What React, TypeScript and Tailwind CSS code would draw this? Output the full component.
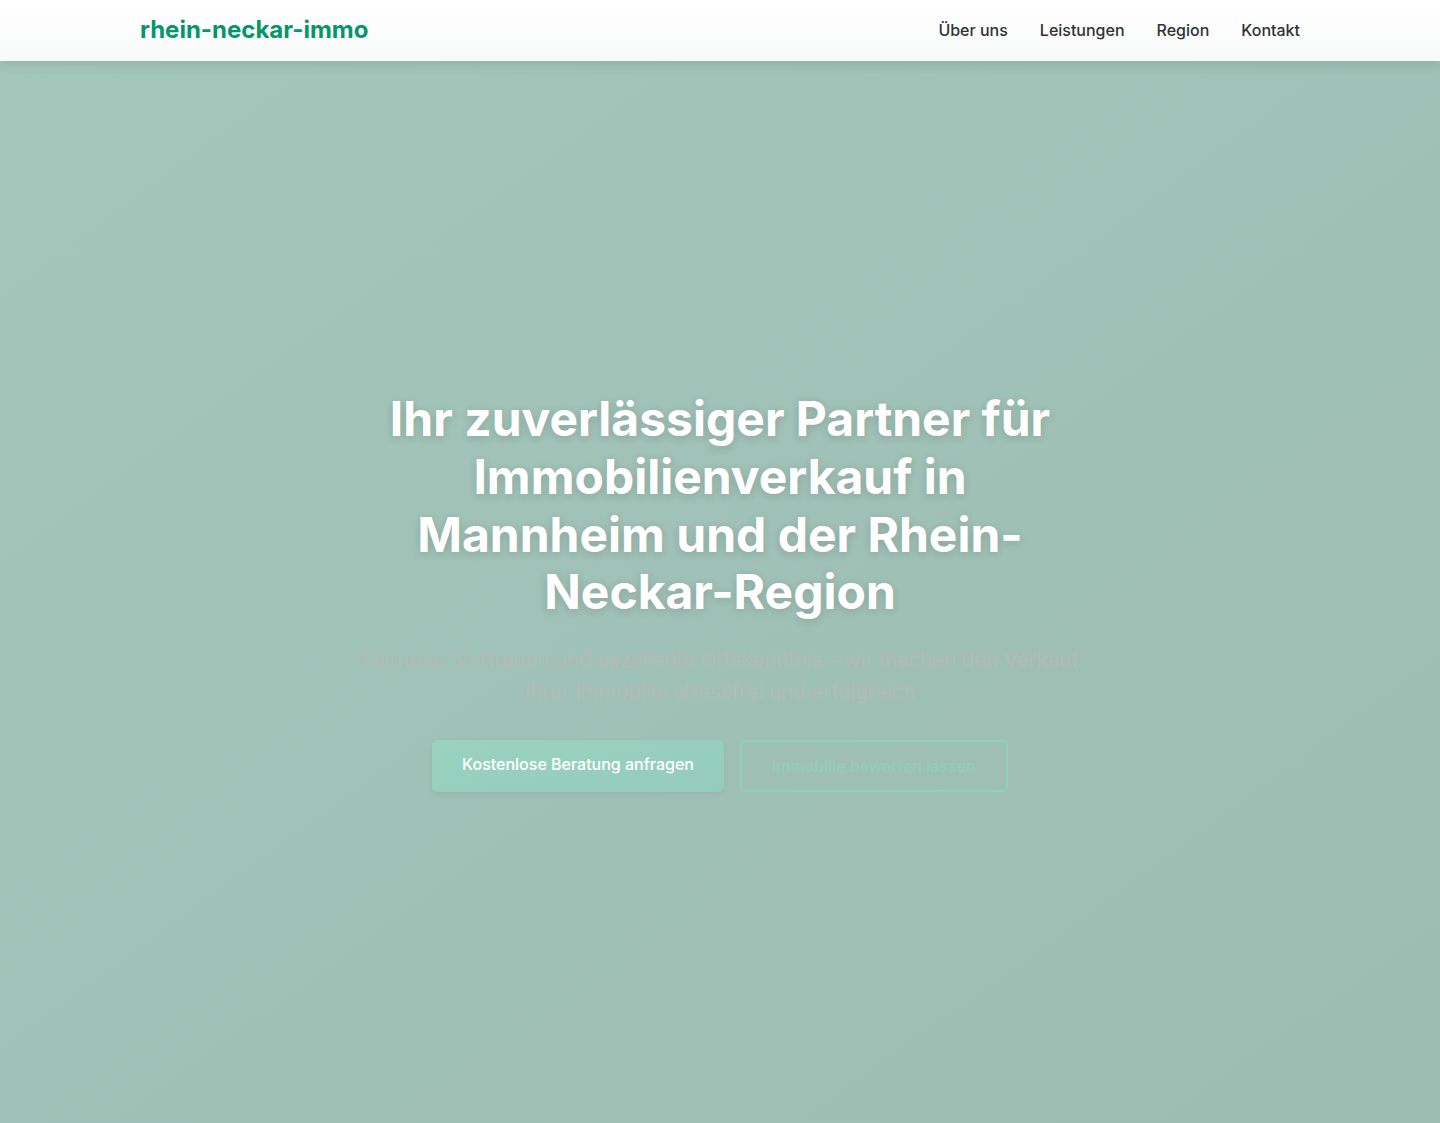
export default function App() {
  const nav = ['Über uns', 'Leistungen', 'Region', 'Kontakt']

  return (
    <div className="min-h-screen font-['Inter',sans-serif]">
      {/* Header */}
      <header className="relative z-10 h-[61px] bg-gradient-to-b from-white to-[#f8faf9] shadow-[0_2px_12px_rgba(0,0,0,0.12)]">
        <div className="mx-auto flex h-full max-w-[1200px] items-center justify-between px-5 pb-[2px]">
          <a href="#" className="text-2xl font-bold text-[#059669]">
            rhein-neckar-immo
          </a>
          <nav className="flex items-center gap-8">
            {nav.map((item) => (
              <a key={item} href="#" className="text-base font-medium text-[#2f3332]">
                {item}
              </a>
            ))}
          </nav>
        </div>
      </header>

      {/* Hero */}
      <section className="flex h-[1062px] items-center justify-center bg-gradient-to-br from-[#a3c6bb] to-[#9dbcb2] px-5 pb-[2px]">
        <div className="flex max-w-3xl flex-col items-center text-center">
          <h1 className="mb-[23px] max-w-[720px] text-5xl leading-[1.2] font-bold text-white [text-shadow:0_2px_8px_rgba(0,0,0,0.15)]">
            Ihr zuverlässiger Partner für Immobilienverkauf in Mannheim und der Rhein-Neckar-Region
          </h1>
          <p className="mb-8 max-w-[740px] text-[20.4px] leading-8 text-[#b3bbb7]">
            Fairness, Vertrauen und exzellente Ortskenntnis – wir machen den Verkauf Ihrer Immobilie stressfrei und erfolgreich
          </p>
          <div className="flex items-center gap-4">
            <button className="h-[52px] rounded-md bg-gradient-to-br from-[#9ad3c0] to-[#94cbbb] px-[30px] pb-[3px] text-base font-medium text-white shadow-[0_2px_6px_rgba(0,0,0,0.06)]">
              Kostenlose Beratung anfragen
            </button>
            <button className="h-[52px] rounded-md border-2 border-[#8fd1bc] px-[30px] pt-[1px] text-base font-medium text-[#90ceba]">
              Immobilie bewerten lassen
            </button>
          </div>
        </div>
      </section>
    </div>
  )
}
